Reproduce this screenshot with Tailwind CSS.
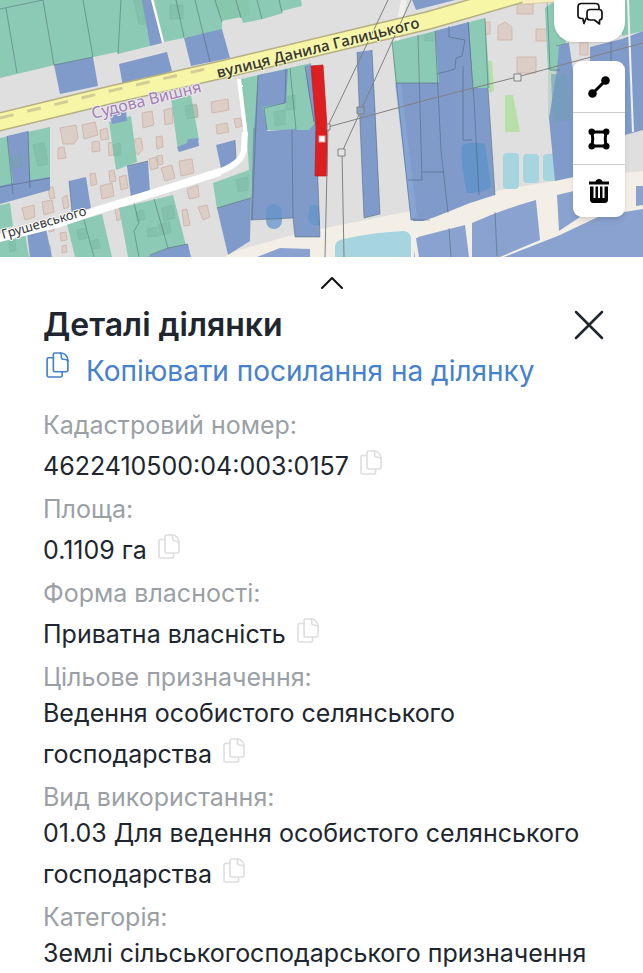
<!DOCTYPE html>
<html lang="uk">
<head>
<meta charset="utf-8">
<meta name="viewport" content="width=device-width, initial-scale=1">
<title>Деталі ділянки</title>
<script src="https://cdn.jsdelivr.net/npm/@tailwindcss/browser@4"></script>
</head>
<body class="bg-white font-['Inter',sans-serif] text-[#20262f]">
<svg class="hidden" aria-hidden="true">
  <symbol id="copy" viewBox="0 0 22 25">
    <g fill="none" stroke="currentColor" stroke-linejoin="round" stroke-linecap="round">
      <path d="M7 5.500H2.500A1.500 1.500 0 0 0 1 7V22.500A1.500 1.500 0 0 0 2.500 24H14A1.500 1.500 0 0 0 15.500 22.500V19.500"/>
      <path d="M8.500 1H14.500C18 1 21 4.500 21 8V17.500A1.500 1.500 0 0 1 19.500 19H8.500A1.500 1.500 0 0 1 7 17.500V2.500A1.500 1.500 0 0 1 8.500 1Z"/>
      <path d="M14 1C15 2 14.800 3.500 14.800 5.500A1.500 1.500 0 0 0 16.300 7C18.500 7 20 7 21 8.500"/>
    </g>
  </symbol>
</svg>

<section class="relative overflow-hidden" aria-label="Карта">
  <svg class="block h-auto w-full" viewBox="0 0 643 257" preserveAspectRatio="xMidYMid slice" role="img" aria-label="Кадастрова карта">
    <rect width="643" height="257" fill="#e0dfdf"/>
    <path fill="#f3efe6" d="M225 257 228 253 300 233 411 211 423 220 435 217 470 202 500 190 573 178 643 171V257Z"/>
    <!-- buildings -->
    <g fill="#dccdc6" stroke="#cfb9ae" stroke-width="1">
      <path d="M60 128 76 125 78 138 74 144 63 144ZM82 125 95 122 98 135 84 139ZM100 130 107 128 109 139 101 140ZM58 148 64 147 66 158 58 159ZM92 142 99 141 100 151 92 152ZM108 143 116 142 118 154 109 156ZM142 113 152 111 154 125 143 128ZM164 110 172 108 173 123 165 125ZM186 106 197 105 198 117 187 118ZM211 102 228 99 229 110 212 113ZM216 125 227 123 229 132 217 134ZM234 119 241 118 242 126 236 128ZM135 139 141 138 143 149 138 155 134 150ZM156 137 162 136 163 147 157 149ZM149 159 156 157 158 168 151 170ZM157 156 162 155 163 164 158 165ZM179 161 192 159 194 173 181 176ZM161 168 172 165 175 178 165 181ZM90 174 95 173 97 184 91 186ZM100 186 112 183 114 196 102 199ZM109 171 114 170 116 181 110 182ZM119 177 126 175 128 188 121 190ZM62 198 67 195 69 207 64 209ZM42 202 52 200 54 212 44 215ZM22 208 34 205 35 217 25 220ZM48 188 53 187 55 198 50 199ZM187 189 198 185 199 197 189 199ZM198 207 207 205 210 217 203 220ZM182 210 187 209 190 225 184 226ZM115 208 120 207 121 219 117 221ZM49 222 53 221 54 231 49 232ZM60 233 66 232 67 240 61 241ZM46 246 50 245 51 254 47 255ZM62 246 66 245 67 252 62 253Z"/>
      <path d="M517 4H533V14H517ZM484 22H490V34H484ZM498 26 505 22 512 27V40H498ZM536 29H548V41H536ZM517 57H536V73H517ZM580 42H588V55H580ZM134 1H144V10H134ZM139 9H149V23H139ZM168 5H182V18H168Z"/>
    </g>
    <!-- grassy spots and ponds -->
    <path fill="#b9dfa9" d="M488 61H492L494 91 489 93ZM505 95H513L520 132H505Z"/>
    <g fill="#a6d4df">
      <path d="M335 257V246Q336 240 344 239Q375 232 404 231Q411 232 411 239V257Z"/>
      <rect x="503" y="153" width="16" height="36" rx="4"/><rect x="523" y="154" width="16" height="29" rx="4"/><rect x="543" y="154" width="14" height="27" rx="4"/>
    </g>
    <!-- green parcels -->
    <g fill="#8ccab5">
      <path d="M0 0H143L150 46 118 54 117 52 55 65 0 78Z"/>
      <path d="M154 0H301L302 6 282 11 283 13 263 19 243 23 241 17 222 21 222 30 184 38 164 42Z"/>
      <path d="M0 138 50 127 50 180 0 187ZM0 205 10 203 13 226 0 230ZM0 239 25 233 29 257H0ZM109 122 131 116 137 162 116 170ZM171 99 191 95 199 140 178 151ZM67 224 102 214 112 257H75ZM119 208 173 195 189 257H128Z"/>
      <path d="M241 79 311 63 316 130H254L251 198 217 209 213 183 249 170 247 140Z"/>
      <path d="M392 42 485 18 490 88H396ZM545 8 556 0 566 43 559 72 548 70ZM622 0H643V31L622 36Z"/>
    </g>
    <path fill="#7fc19f" d="M214 0 222 20 250 16 248 0ZM548 70H557L552 122 548 118Z" opacity=".3"/>
    <!-- blue parcels -->
    <g fill="#809bca">
      <path d="M142 0H152L162 43 150 46ZM54 65 93 57 98 86 60 94ZM119 64 167 52 172 71 150 78 123 87ZM184 38 222 29 230 58 191 66Z"/>
      <path d="M412 0H455L416 10Z"/>
      <path d="M7 136 28 131 30 180 50 177V190L0 204V186L13 183ZM27 233 46 229 52 257H30ZM69 181 86 177 91 209 72 212ZM109 112 126 110 127 121 112 124ZM177 147 187 143 188 139 198 138 199 146 179 152ZM127 166 148 161 150 193 131 198ZM149 256 168 248 188 244 191 257H149Z"/>
      <path d="M217 208 251 198 250 241 228 255ZM216 145 235 140 236 160 222 173Z"/>
      <path d="M258 75 288 69 286 103 263 107 267 131 309 128 314 124 308 90 305 66 311 64 316 128 320 237H295L293 218 251 220 254 130Z"/>
      <path d="M357 52 372 50 376 128 380 214 364 218Z"/>
      <path d="M435 31 469 22 473 88H488L495 195 470 203 435 217 423 221H411L396 83H439Z"/>
      <path d="M559 46 569 43 573 70V177L555 181 549 118 557 70Z"/>
      <path d="M590 47 622 39 643 31V133H633V180H590Z"/>
    </g>
    <path fill="#8ccab5" d="M290 68 304 65 308 95 314 124 309 130 296 130Z"/>
    <path fill="#e0dfdf" d="M625 135 643 130V174L625 176Z"/>
    <path fill="#f3efe6" d="M573 178 643 171V187L573 193Z"/>
    <g fill="#8aa2cf">
      <path d="M257 257 280 248 310 249V257ZM414 238 465 225 469 257H414ZM472 223Q500 210 536 200L540 240 500 257H472ZM557 195 578 190 580 217 559 231ZM636 186H643V205L636 206Z"/>
      <path d="M504 257 560 235 600 216 643 209V257Z"/>
    </g>
    <path fill="none" stroke="#f1efea" stroke-width="4" d="M411 220 417 257"/>
    <path fill="none" stroke="#f1efea" stroke-width="2" d="M628 0 633 132"/>
    <path fill="#f1efea" d="M411 221H420L418 238H413Z"/>
    <path fill="none" stroke="#8aabde" stroke-width="6" d="M398 84 414 218" opacity=".6"/>
    <!-- water seen through parcels -->
    <g fill="#6494c9">
      <path d="M462 145Q472 141 485 144L491 186Q487 193 467 193Q460 165 462 145Z"/>
      <rect x="266" y="204" width="16" height="25" rx="8" opacity=".75"/><path d="M310 206Q318 203 319 209L320 226Q308 226 308 216Z" opacity=".75"/>
    </g>
    <path fill="#6f9fb6" opacity=".6" d="M551 74H567L570 120 553 122Z"/>
    <path fill="#6fae9a" stroke="#689f8c" opacity=".3" d="M274 112 285 110V124L275 126ZM287 97 295 95V109L286 110ZM236 180 248 177V190L238 192ZM134 0H143L145 24H139ZM170 5H183V19H170ZM12 156 20 154 21 167 13 168ZM33 145 44 143 48 164 38 166ZM113 145 120 143 121 155 114 156ZM185 106 196 104 198 117 187 119ZM136 212 143 210 145 219 137 221ZM162 208 173 205 175 218 164 221ZM147 229 156 227 158 236 148 237ZM158 225 169 222 171 233 160 235ZM77 230 85 228 87 238 79 240ZM92 241 98 239 100 248 93 249ZM9 242 15 240 16 250 10 252ZM425 35 433 33V41H425Z"/>
    <!-- parcel boundaries -->
    <g fill="none" stroke="#3b5562" stroke-width=".7" opacity=".6">
      <path d="M0 9 43 0M6 8 17 73M43 0 54 65 93 57 83 0M121 0 118 54M176 0 184 37M195 0 210 62M215 0 222 22M236 0 241 18M257 0 262 19M279 0 282 12"/>
      <path d="M7 136 13 194M28 131 30 188M0 187 50 178M127 166 148 161M134 203 139 223 134 231 139 257M154 199 168 248M84 220 94 257M150 255 168 248 188 244M69 181 72 212"/>
      <path d="M258 75 252 220M286 69 285 103 264 108 267 130M290 68 296 130M292 130 293 218M254 128 251 220 293 218 295 237H320L316 130M305 66 314 122M217 208 251 198M235 140 236 160"/>
      <path d="M357 52 364 218 380 214 372 50M392 42 411 220H430M418 35 422 180H408M396 83H439M435 31 441 150 448 213M449 26V37L465 40 462 56 456 58 455 69M468 22 474 100 479 195M485 18 488 88 495 195M455 69 437 74M463 66V140H472M423 172H444"/>
      <path d="M547 0 550 70H560M556 46 569 43M611 42V62M495 212 497 256M449 228 451 257"/>
    </g>
    <!-- minor roads -->
    <path fill="none" stroke="#fff" stroke-width="8" stroke-linejoin="round" d="M-4 239 60 223 92 212 160 191 220 172"/>
    <path fill="none" stroke="#fff" stroke-width="6" d="M216 173Q242 164 244 150L245 132"/>
    <path fill="none" stroke="#fff" stroke-width="4" d="M246 136 239 79"/>
    <path fill="none" stroke="#fff" stroke-width="2" d="M152 0 163 42M238 86H243"/>
    <path fill="none" stroke="#f4f3f1" stroke-width="6" d="M404 0 396 40" opacity=".8"/>
    <!-- main road -->
    <path fill="#f8eec0" stroke="#d8cda0" d="M508 5 515 -2H560L556 2Z"/>
    <path fill="none" stroke="#b5b082" stroke-width="19" d="M-5 123 110 95 220 70 430 20 520 -6"/>
    <path fill="none" stroke="#f7f6a6" stroke-width="16" d="M-5 123 110 95 220 70 430 20 520 -6"/>
    <path fill="none" stroke="#d3cd95" stroke-width="3" stroke-dasharray="14 14" d="M0 118 110 91 218 66"/>
    <!-- selected parcel -->
    <path fill="#de1f22" stroke="#b51c22" stroke-width=".7" d="M311 66 323 65 327 127V176H315L316 128Z"/>
    <rect x="319" y="136" width="6" height="6" fill="#fff" stroke="#e9a3a3"/>
    <!-- power lines -->
    <g fill="none" stroke="#808080" stroke-width="1">
      <path d="M388 0 328 126 325 257M411 0 342 152 344 257M328 127 430 99 517 77 643 43"/>
      <g fill="#e4e4e4"><path d="M327 124H330V130H327ZM338 149H345V156H338ZM514 74H521V81H514Z"/></g>
      <path fill="#8ba0c8" d="M357 107H364V114H357Z"/>
    </g>
    <g stroke-linejoin="round" paint-order="stroke">
      <text font-family="'Open Sans','Noto Sans',sans-serif" transform="translate(218 78) rotate(-14)" font-size="15" font-weight="600" fill="#38382c" stroke="#f7f6b8" stroke-width="2">вулиця Данила Галицького</text>
      <text font-family="'Noto Sans',sans-serif" transform="translate(93 119) rotate(-14)" font-size="16" fill="#a07fb2" stroke="#eee9ee" stroke-width="2">Судова Вишня</text>
      <text font-family="'Noto Sans',sans-serif" transform="translate(3 239) rotate(-16)" font-size="13" fill="#333" stroke="#fff" stroke-width="2">Грушевського</text>
    </g>
  </svg>

  <button type="button" aria-label="Чат" class="absolute top-0 right-[18px] flex h-[42px] w-[71px] justify-center rounded-b-[20px] bg-white pt-0.5 shadow-sm">
    <svg class="h-6 w-[26px]" viewBox="0 0 26 24" fill="none" stroke="#111" stroke-width="1.700" stroke-linejoin="round" stroke-linecap="round">
      <path d="M9 16.500 7 21.500 5.800 16.500H4.500Q1 16.500 1 13V5Q1 1.500 4.500 1.500H18.500Q22 1.500 22 5V6.500"/>
      <path d="M13 7.500H22Q25 7.500 25 10.500V15Q25 18 22.500 18V22L17.500 18H13Q10 18 10 15V10.500Q10 7.500 13 7.500Z"/>
    </svg>
  </button>

  <div class="absolute top-[61px] right-[18px] flex w-[52px] flex-col divide-y divide-[#ccc] overflow-hidden rounded-[9px] bg-white shadow-md">
    <button type="button" aria-label="Виміряти відстань" class="flex h-[52px] items-center justify-center">
      <svg class="size-6" viewBox="0 0 24 24"><path d="M6.500 17.500 17.500 6.500" stroke="#000" stroke-width="3"/><circle cx="5.500" cy="18.500" r="4.300"/><circle cx="18.500" cy="5.500" r="4.300"/></svg>
    </button>
    <button type="button" aria-label="Виміряти площу" class="flex h-[52px] items-center justify-center">
      <svg class="size-6" viewBox="0 0 24 24"><path d="M5 5H19Q17.500 12 19 19H5Q6.500 12 5 5Z" fill="none" stroke="#000" stroke-width="3"/><circle cx="4.700" cy="4.700" r="3.200"/><circle cx="19.300" cy="4.700" r="3.200"/><circle cx="4.700" cy="19.300" r="3.200"/><circle cx="19.300" cy="19.300" r="3.200"/></svg>
    </button>
    <button type="button" aria-label="Видалити" class="flex h-[52px] items-center justify-center">
      <svg class="size-6" viewBox="0 0 24 24"><path d="M2 2.500H8.500Q9 0 12 0T15.500 2.500H22V5.500H2ZM3 7.500H6.500V19H8.500V7.500H11V19H13V7.500H15.500V19H17.500V7.500H21V20.500Q21 24 17.500 24H6.500Q3 24 3 20.500Z"/></svg>
    </button>
  </div>
</section>

<main class="pr-[22px] pl-[43px]">
  <div class="flex justify-center pt-4">
    <button type="button" aria-label="Розгорнути" class="p-1">
      <svg class="h-3 w-6" viewBox="0 0 24 12" fill="none" stroke="#111" stroke-width="2" stroke-linecap="round" stroke-linejoin="round"><path d="M2 11 12 1 22 11"/></svg>
    </button>
  </div>

  <header class="flex items-center justify-between pt-3 pr-4">
    <h1 class="text-[32px] leading-[40px] font-semibold">Деталі ділянки</h1>
    <button type="button" aria-label="Закрити">
      <svg class="size-8" viewBox="0 0 32 32" fill="none" stroke="#20262f" stroke-width="2.500" stroke-linecap="round"><path d="M3 3 29 29M29 3 3 29"/></svg>
    </button>
  </header>

  <a href="#" class="flex items-start gap-[17px] pl-[3px] text-[28px] leading-[52px] text-[#4681cd]">
    <svg class="mt-[7px] h-[26px] w-[23px] shrink-0 [stroke-width:1.6]"><use href="#copy"/></svg>
    <span>Копіювати посилання на ділянку</span>
  </a>

  <dl class="flex flex-col gap-[7px] pt-[10px] text-[25px] leading-[36px]">
    <div>
      <dt class="text-[#9b9fa6]">Кадастровий номер:</dt>
      <dd>4622410500:04:003:0157 <button type="button" aria-label="Копіювати кадастровий номер" class="ml-1 inline-block pt-[7px] pb-0.5 align-baseline leading-none text-[#dedede]"><svg class="block h-[25px] w-[22px] [stroke-width:1.6]"><use href="#copy"/></svg></button></dd>
    </div>
    <div>
      <dt class="text-[#9b9fa6]">Площа:</dt>
      <dd>0.1109 га <button type="button" aria-label="Копіювати площу" class="ml-1 inline-block pt-[7px] pb-0.5 align-baseline leading-none text-[#dedede]"><svg class="block h-[25px] w-[22px] [stroke-width:1.6]"><use href="#copy"/></svg></button></dd>
    </div>
    <div>
      <dt class="text-[#9b9fa6]">Форма власності:</dt>
      <dd>Приватна власність <button type="button" aria-label="Копіювати форму власності" class="ml-1 inline-block pt-[7px] pb-0.5 align-baseline leading-none text-[#dedede]"><svg class="block h-[25px] w-[22px] [stroke-width:1.6]"><use href="#copy"/></svg></button></dd>
    </div>
    <div>
      <dt class="text-[#9b9fa6]">Цільове призначення:</dt>
      <dd>Ведення особистого селянського господарства <button type="button" aria-label="Копіювати цільове призначення" class="ml-1 inline-block pt-[7px] pb-0.5 align-baseline leading-none text-[#dedede]"><svg class="block h-[25px] w-[22px] [stroke-width:1.6]"><use href="#copy"/></svg></button></dd>
    </div>
    <div>
      <dt class="text-[#9b9fa6]">Вид використання:</dt>
      <dd>01.03 Для ведення особистого селянського господарства <button type="button" aria-label="Копіювати вид використання" class="ml-1 inline-block pt-[7px] pb-0.5 align-baseline leading-none text-[#dedede]"><svg class="block h-[25px] w-[22px] [stroke-width:1.6]"><use href="#copy"/></svg></button></dd>
    </div>
    <div>
      <dt class="text-[#9b9fa6]">Категорія:</dt>
      <dd>Землі сільськогосподарського призначення</dd>
    </div>
  </dl>
</main>
</body>
</html>
